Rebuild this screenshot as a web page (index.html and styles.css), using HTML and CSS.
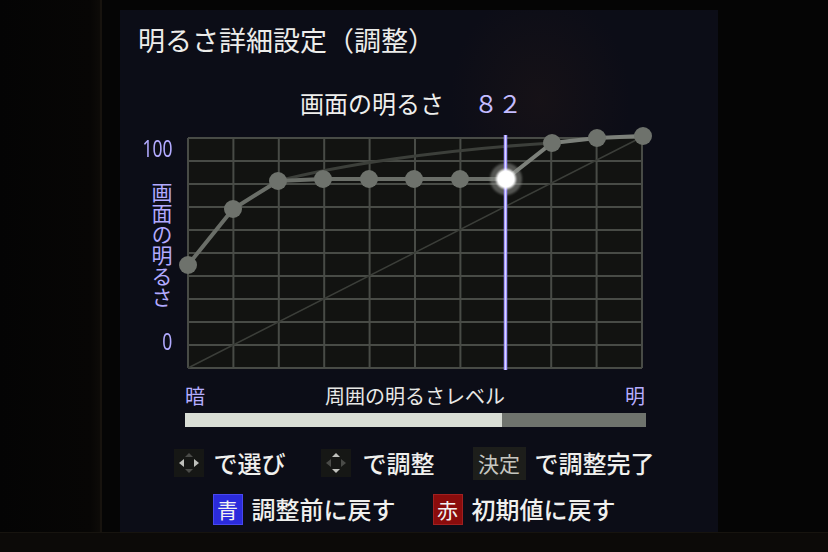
FILE: index.html
```html
<!DOCTYPE html>
<html lang="ja">
<head>
<meta charset="utf-8">
<title>明るさ詳細設定（調整）</title>
<link rel="stylesheet" href="styles.css">
</head>
<body>
<div class="screen">
  <div class="stage">
    <div class="bezel"></div>
    <div class="panel">
      <h1 class="title">明るさ詳細設定（調整）</h1>
      <div class="value"><span>画面の明るさ</span><span class="num">８２</span></div>
      <div class="chart">
        <div class="yaxis">
          <span class="ytick y100"><span class="narrow">100</span></span>
          <span class="ylabel">画面の明るさ</span>
          <span class="ytick y0"><span class="narrow">0</span></span>
        </div>
        <svg class="plot" width="480" height="254" viewBox="0 0 480 254">
          <defs>
            <filter id="blur2" x="-50%" y="-50%" width="200%" height="200%"><feGaussianBlur stdDeviation="1.6"/></filter>
            <filter id="blur1" x="-50%" y="-50%" width="200%" height="200%"><feGaussianBlur stdDeviation="1"/></filter>
          </defs>
          <rect x="12" y="12" width="454" height="230" fill="#121311"/>
          <g stroke="#484b46" stroke-width="2" fill="none">
            <path d="M12 12V242M57.4 12V242M102.8 12V242M148.2 12V242M193.6 12V242M239 12V242M284.4 12V242M329.8 12V242M375.2 12V242M420.6 12V242M466 12V242"/>
            <path d="M12 12H466M12 35H466M12 58H466M12 81H466M12 104H466M12 127H466M12 150H466M12 173H466M12 196H466M12 219H466M12 242H466"/>
          </g>
          <path d="M12 242L466 11" stroke="#3b3e39" stroke-width="1.5" fill="none"/>
          <path d="M102 55C160 40 260 24 376 17L421 12L466 10" stroke="#3c3f3a" stroke-width="3" fill="none"/>
          <polyline points="12,139 57,83 102,55 147,53 193,53 238,53 284,53 330,53" stroke="#6a6e68" stroke-width="4" fill="none"/>
          <polyline points="330,53 376,17 421,12 466,10" stroke="#7c807a" stroke-width="4" fill="none"/>
          <g fill="#6e726c">
            <circle cx="12" cy="139" r="9"/>
            <circle cx="57" cy="83" r="9"/>
            <circle cx="102" cy="55" r="9"/>
            <circle cx="147" cy="53" r="9"/>
            <circle cx="193" cy="53" r="9"/>
            <circle cx="238" cy="53" r="9"/>
            <circle cx="284" cy="53" r="9"/>
            <circle cx="376" cy="17" r="9"/>
            <circle cx="421" cy="12" r="9"/>
            <circle cx="467" cy="10" r="9"/>
          </g>
          <circle cx="330" cy="53" r="16" fill="#8a8c88" opacity="0.55" filter="url(#blur1)"/>
          <path d="M329.5 9V244" stroke="#4a3cff" stroke-width="6" filter="url(#blur2)"/>
          <path d="M329.5 9V244" stroke="#9c90ff" stroke-width="3.5"/>
          <path d="M329.5 9V244" stroke="#dcd8ff" stroke-width="1.2"/>
          <circle cx="330" cy="53" r="10" fill="#ffffff" filter="url(#blur1)"/>
          <circle cx="330" cy="53" r="8" fill="#ffffff"/>
        </svg>
      </div>
      <div class="xaxis"><span class="lav">暗</span><span>周囲の明るさレベル</span><span class="lav">明</span></div>
      <div class="bar"><div class="fill" style="width:68.8%"></div></div>
      <div class="help">
        <div class="row">
          <span class="key dpad">
            <svg width="30" height="28" viewBox="0 0 30 28">
              <path d="M5 14L10 10V18Z" fill="#bfc0bc"/>
              <path d="M25 14L20 10V18Z" fill="#bfc0bc"/>
              <path d="M15 4L11 8H19Z" fill="#4a4b48"/>
              <path d="M15 24L11 20H19Z" fill="#4a4b48"/>
            </svg>
          </span>
          <span class="txt g10">で選び</span>
          <span class="key dpad g35">
            <svg width="30" height="28" viewBox="0 0 30 28">
              <path d="M5 14L10 10V18Z" fill="#4a4b48"/>
              <path d="M25 14L20 10V18Z" fill="#4a4b48"/>
              <path d="M15 4L11 8H19Z" fill="#bfc0bc"/>
              <path d="M15 24L11 20H19Z" fill="#bfc0bc"/>
            </svg>
          </span>
          <span class="txt g12">で調整</span>
          <span class="key kettei g38">決定</span>
          <span class="txt g9">で調整完了</span>
        </div>
        <div class="row row2">
          <span class="key color blue">青</span>
          <span class="txt g9">調整前に戻す</span>
          <span class="key color red g37">赤</span>
          <span class="txt g9">初期値に戻す</span>
        </div>
      </div>
    </div>
  </div>
  <div class="strip"></div>
</div>
</body>
</html>
```

FILE: styles.css
```css
* { box-sizing: border-box; }
html, body { margin: 0; padding: 0; background: #050505; }
body {
  font-family: "Noto Sans CJK JP", "Noto Sans", sans-serif;
  font-weight: 400;
  color: #e8e8e6;
}
.screen {
  width: 828px;
  height: 552px;
  overflow: hidden;
  display: flex;
  flex-direction: column;
  background: #050505;
}
.stage {
  display: flex;
  height: 532px;
}
.bezel {
  width: 102px;
  margin-right: 18px;
  border-right: 2px solid #17130e;
  background: linear-gradient(90deg, #040404 0%, #070605 90%, #0d0b08 100%);
}
.panel {
  width: 598px;
  height: 522px;
  margin-top: 10px;
  background:
    radial-gradient(ellipse 90px 110px at 420px 90px, rgba(40, 26, 22, 0.35), rgba(40, 26, 22, 0) 100%),
    #0c0d17;
  display: flex;
  flex-direction: column;
}
.strip {
  height: 20px;
  background: #0c0a08;
  border-top: 1px solid #17140f;
}
.title {
  margin: 15px 0 0 18px;
  font-size: 27px;
  line-height: 30px;
  font-weight: 400;
  color: #ececea;
  letter-spacing: 0;
}
.value {
  margin-top: 34px;
  padding-left: 180px;
  font-size: 24px;
  line-height: 28px;
  display: flex;
  color: #efefed;
}
.value .num {
  margin-left: 30px;
  color: #c4bcff;
}
.chart {
  margin-top: 9px;
  padding-left: 20px;
  display: flex;
  height: 254px;
}
.yaxis {
  width: 36px;
  padding-right: 4px;
  display: flex;
  flex-direction: column;
  align-items: flex-end;
  color: #b2aaff;
}
.ytick {
  display: block;
  font-family: "Noto Sans", sans-serif;
  font-weight: 400;
  font-size: 23px;
  line-height: 20px;
  height: 20px;
}
.narrow {
  display: inline-block;
  transform: scaleX(0.76);
  transform-origin: right center;
}
.y100 { margin-top: 12px; }
.ylabel {
  margin-top: 24px;
  writing-mode: vertical-rl;
  font-size: 21px;
  line-height: 21px;
  height: 126px;
  width: 21px;
}
.y0 { margin-top: 23px; }
.plot { display: block; }
.xaxis {
  margin-top: 4px;
  margin-left: 65px;
  width: 460px;
  display: flex;
  justify-content: space-between;
  font-size: 20px;
  line-height: 24px;
  color: #e8e8e6;
}
.lav { color: #b6aeff; }
.bar {
  margin-top: 5px;
  margin-left: 65px;
  width: 461px;
  height: 14px;
  background: #6f736d;
}
.fill {
  height: 100%;
  background: #d9ddd5;
}
.help {
  margin-top: 20px;
  padding-right: 10px;
  display: flex;
  flex-direction: column;
  align-items: center;
}
.row {
  display: flex;
  align-items: center;
  height: 32px;
}
.row2 { margin-top: 14px; }
.txt {
  font-size: 24px;
  line-height: 32px;
  font-weight: 500;
  color: #f0f0ee;
  white-space: nowrap;
}
.key {
  display: flex;
  align-items: center;
  justify-content: center;
}
.dpad {
  width: 30px;
  height: 28px;
  background: #161715;
}
.dpad svg { display: block; }
.kettei {
  width: 53px;
  height: 33px;
  background: #1d1e1b;
  color: #c6c7c0;
  font-size: 21px;
  line-height: 33px;
}
.color {
  width: 30px;
  height: 31px;
  font-size: 21px;
  line-height: 31px;
  color: #f2f2f2;
}
.blue { background: #2b2bdc; box-shadow: inset 0 0 0 1px #4848f0; }
.red { background: #8a0c0c; box-shadow: inset 0 0 0 1px #a02020; }
.g9 { margin-left: 9px; }
.g10 { margin-left: 10px; }
.g12 { margin-left: 12px; }
.g35 { margin-left: 35px; }
.g37 { margin-left: 37px; }
.g38 { margin-left: 38px; }
```
